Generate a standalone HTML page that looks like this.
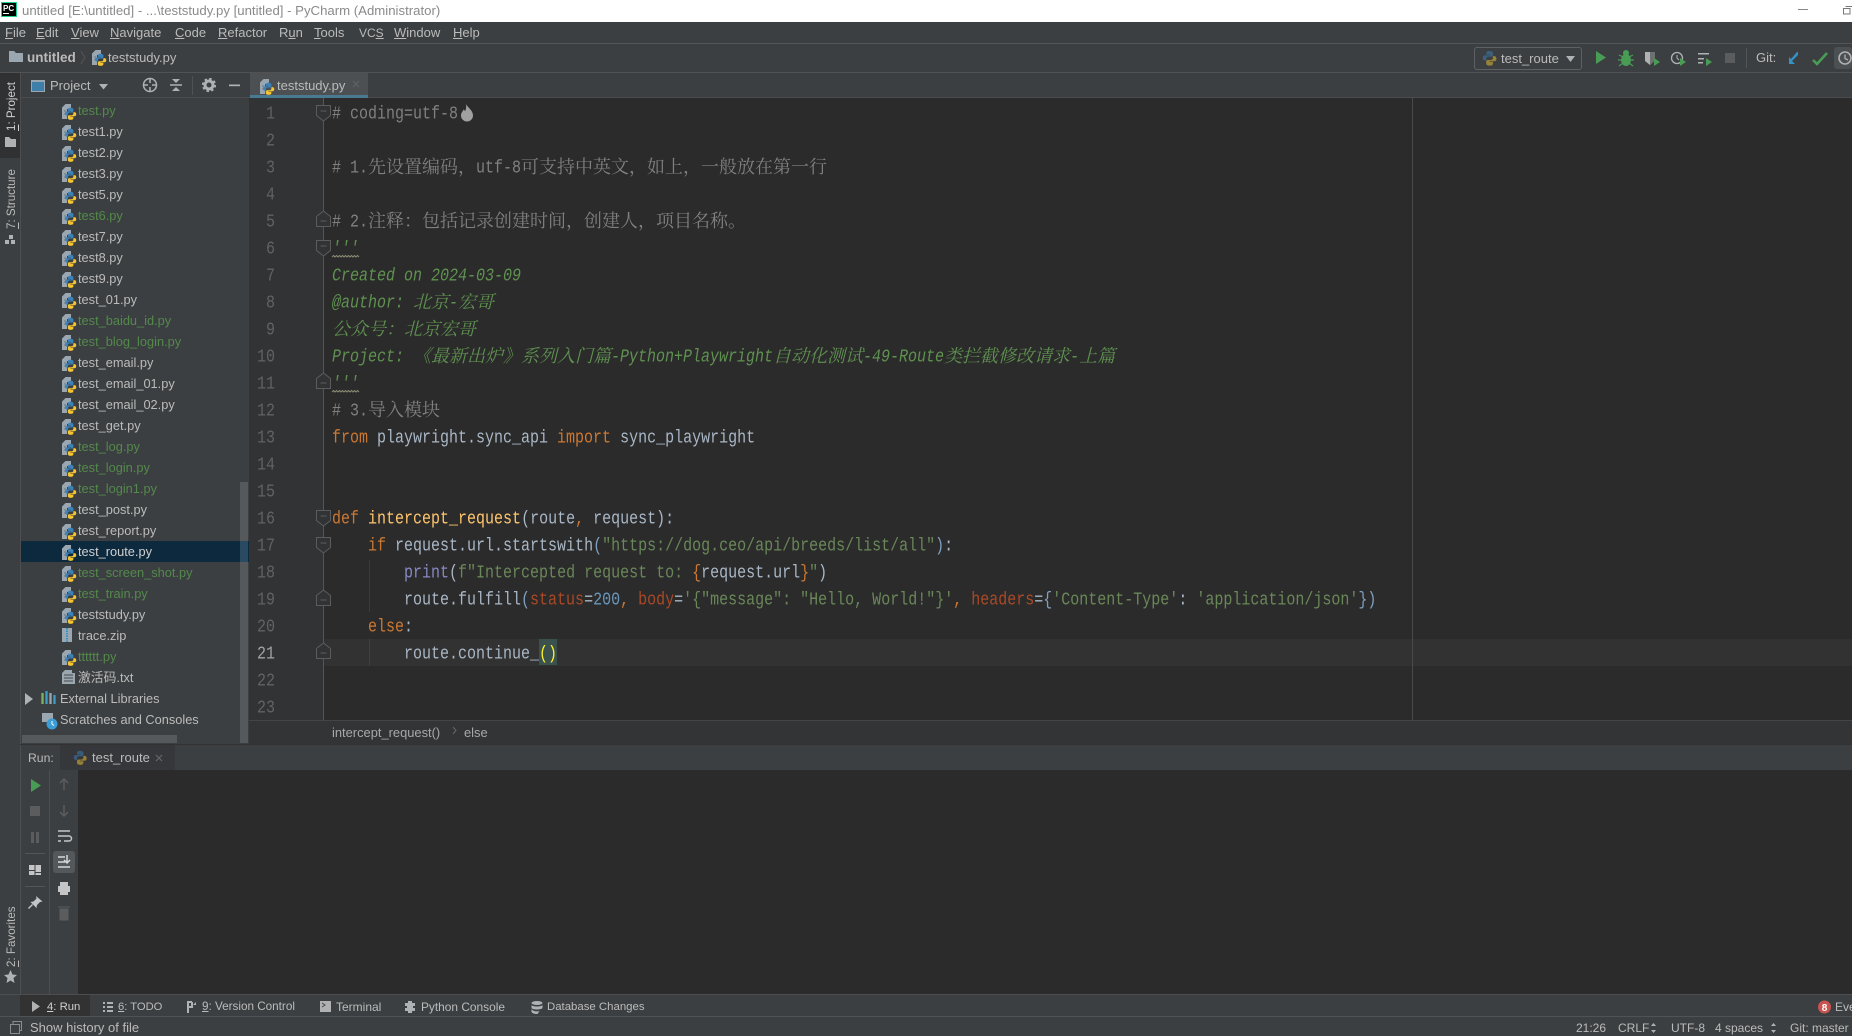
<!DOCTYPE html>
<html><head><meta charset="utf-8"><title>PyCharm</title>
<style>
html,body{margin:0;padding:0;width:1852px;height:1036px;overflow:hidden;background:#3c3f41}
body{font-family:"Liberation Sans","Noto Sans CJK SC",sans-serif;font-size:13px;color:#bbb;position:relative}
.a{position:absolute}
.t{position:absolute;white-space:pre;line-height:20px;height:20px}
u{text-decoration:underline}
#tree{position:absolute;left:78px;top:100px;width:160px}
#tree div{height:21px;line-height:21px;white-space:pre;color:#bbb;font-size:12.8px}
#tree .g{color:#53894b}
#code{position:absolute;left:332px;top:101px;font-family:"Liberation Mono",monospace;font-size:15px;color:#a9b7c6}
#code div{position:absolute;left:0;height:27px;line-height:27px;white-space:pre}
#code div.y{transform:scaleY(1.2);transform-origin:0 50%}
b.y{display:inline-block;font-weight:normal;transform:scaleY(1.2)}
#nums{position:absolute;left:249px;width:26px;top:101px;font-family:"Liberation Mono",monospace;font-size:15px;color:#606366;text-align:right}
#nums div{height:27px;line-height:27px;transform:scaleY(1.2)}
i.c{font-family:"Noto Serif CJK SC",serif;font-size:18px;line-height:1;position:relative;top:1px}
.m{color:#808080}
.d{color:#5f9150;font-style:italic}
.k{color:#cc7832}
.s{color:#6a8759}
.f{color:#ffc66d}
.b{color:#8888c6}
.p{color:#aa4926}
.n{color:#6897bb}
.q{color:#7f9fc0}
.v{position:absolute;white-space:pre;writing-mode:vertical-rl;transform:rotate(180deg);font-size:11.6px;color:#bbb;line-height:14px}
</style></head>
<body>
<!-- panels -->
<div class="a" style="left:0;top:0;width:1852px;height:22px;background:#fff"></div>
<div class="a" style="left:0;top:43px;width:1852px;height:1px;background:#555"></div>
<div class="a" style="left:0;top:72px;width:1852px;height:1px;background:#505254"></div>
<div class="a" style="left:20px;top:97px;width:1832px;height:1px;background:#4a4c4e"></div>
<div class="a" style="left:0;top:73px;width:20px;height:85px;background:#2f3132"></div>
<div class="a" style="left:20px;top:73px;width:1px;height:921px;background:#4c4e50"></div>
<!-- tab -->
<div class="a" style="left:250px;top:73px;width:118px;height:22px;background:#4c5052"></div>
<div class="a" style="left:250px;top:95px;width:118px;height:3px;background:#4a7a92"></div>
<!-- editor -->
<div class="a" style="left:249px;top:98px;width:75px;height:622px;background:#313335"></div>
<div class="a" style="left:324px;top:98px;width:1528px;height:622px;background:#2b2b2b"></div>
<div class="a" style="left:324px;top:639px;width:1528px;height:27px;background:#323232"></div>
<div class="a" style="left:1412px;top:98px;width:1px;height:622px;background:#4a4a4a"></div>
<div class="a" style="left:369px;top:560px;width:1px;height:52px;background:#3b3b3b"></div>
<div class="a" style="left:369px;top:639px;width:1px;height:27px;background:#3f3f3f"></div>
<div class="a" style="left:539px;top:639px;width:18px;height:26px;background:#3b514d"></div>
<div class="a" style="left:249px;top:720px;width:1603px;height:24px;background:#323436;border-top:1px solid #444;box-sizing:border-box"></div>
<!-- project scrollbars, selection -->
<div class="a" style="left:21px;top:541px;width:228px;height:21px;background:#0d293e"></div>
<div class="a" style="left:240px;top:482px;width:8px;height:261px;background:#56595b"></div>
<div class="a" style="left:240px;top:541px;width:8px;height:21px;background:#2a4a62"></div>
<div class="a" style="left:22px;top:735px;width:155px;height:8px;background:#56595b"></div>
<!-- run panel -->
<div class="a" style="left:20px;top:744px;width:1832px;height:1px;background:#323232"></div>
<div class="a" style="left:60px;top:745px;width:115px;height:25px;background:#35373a"></div>
<div class="a" style="left:78px;top:770px;width:1774px;height:224px;background:#2b2b2b"></div>
<div class="a" style="left:49px;top:770px;width:1px;height:224px;background:#4c4e50"></div>
<div class="a" style="left:53px;top:851px;width:22px;height:22px;background:#55585a;border-radius:3px"></div>
<div class="a" style="left:25px;top:853px;width:20px;height:1px;background:#555"></div>
<div class="a" style="left:25px;top:886px;width:20px;height:1px;background:#555"></div>
<div class="a" style="left:0;top:994px;width:1852px;height:1px;background:#4c4e50"></div>
<div class="a" style="left:0;top:1016px;width:1852px;height:1px;background:#505254"></div>
<div class="a" style="left:20px;top:995px;width:70px;height:21px;background:#323232"></div>
<!-- toolbar box -->
<div class="a" style="left:1474px;top:47px;width:106px;height:21px;border:1px solid #5e6163;border-radius:3px"></div>
<div class="a" style="left:1746px;top:48px;width:1px;height:20px;background:#555"></div>
<div class="a" style="left:192px;top:76px;width:1px;height:19px;background:#4f5153"></div>
<div class="a" style="left:1834px;top:47px;width:18px;height:22px;background:#4c5052;border-radius:3px"></div>

<!-- title + menu -->
<div class="t" style="left:22px;top:0;font-size:13.2px;line-height:22px;color:#8a8a8a">untitled [E:\untitled] - ...\teststudy.py [untitled] - PyCharm (Administrator)</div>
<div class="t" style="left:5px;top:23px"><u>F</u>ile</div>
<div class="t" style="left:36px;top:23px"><u>E</u>dit</div>
<div class="t" style="left:71px;top:23px"><u>V</u>iew</div>
<div class="t" style="left:110px;top:23px"><u>N</u>avigate</div>
<div class="t" style="left:175px;top:23px"><u>C</u>ode</div>
<div class="t" style="left:218px;top:23px"><u>R</u>efactor</div>
<div class="t" style="left:279px;top:23px">R<u>u</u>n</div>
<div class="t" style="left:314px;top:23px"><u>T</u>ools</div>
<div class="t" style="left:359px;top:23px;font-size:12px">VC<u>S</u></div>
<div class="t" style="left:394px;top:23px"><u>W</u>indow</div>
<div class="t" style="left:453px;top:23px"><u>H</u>elp</div>
<!-- nav -->
<div class="t" style="left:27px;top:48px;font-weight:bold;font-size:13.5px">untitled</div>
<div class="t" style="left:108px;top:48px">teststudy.py</div>
<div class="t" style="left:1501px;top:49px;color:#bbb">test_route</div>
<div class="t" style="left:1756px;top:48px">Git:</div>
<!-- project header -->
<div class="t" style="left:50px;top:76px">Project</div>
<div class="t" style="left:277px;top:76px">teststudy.py</div>
<!-- left stripe -->
<div class="v" style="left:5px;top:82px;height:49px;color:#d0d0d0"><u>1</u>: Project</div>
<div class="v" style="left:5px;top:169px;height:60px"><u>7</u>: Structure</div>
<div class="v" style="left:5px;top:907px;height:60px"><u>2</u>: Favorites</div>

<!-- tree -->
<div id="tree">
<div class="g">test.py</div>
<div>test1.py</div>
<div>test2.py</div>
<div>test3.py</div>
<div>test5.py</div>
<div class="g">test6.py</div>
<div>test7.py</div>
<div>test8.py</div>
<div>test9.py</div>
<div>test_01.py</div>
<div class="g">test_baidu_id.py</div>
<div class="g">test_blog_login.py</div>
<div>test_email.py</div>
<div>test_email_01.py</div>
<div>test_email_02.py</div>
<div>test_get.py</div>
<div class="g">test_log.py</div>
<div class="g">test_login.py</div>
<div class="g">test_login1.py</div>
<div>test_post.py</div>
<div>test_report.py</div>
<div style="color:#d0d0d0">test_route.py</div>
<div class="g">test_screen_shot.py</div>
<div class="g">test_train.py</div>
<div>teststudy.py</div>
<div>trace.zip</div>
<div class="g">tttttt.py</div>
<div>激活码.txt</div>
</div>
<div class="t" style="left:60px;top:689px;font-size:12.8px">External Libraries</div>
<div class="t" style="left:60px;top:710px;font-size:12.8px">Scratches and Consoles</div>

<!-- line numbers -->
<div id="nums">
<div>1</div><div>2</div><div>3</div><div>4</div><div>5</div><div>6</div><div>7</div><div>8</div><div>9</div><div>10</div><div>11</div><div>12</div><div>13</div><div>14</div><div>15</div><div>16</div><div>17</div><div>18</div><div>19</div><div>20</div><div style="color:#a4a3a3">21</div><div>22</div><div>23</div>
</div>

<!-- code -->
<div id="code">
<div class="m y" style="top:0"># coding=utf-8</div>
<div class="m" style="top:54px"><b class="y"># 1.</b><i class="c" style="font-style:normal">先设置编码，</i><b class="y">utf-8</b><i class="c" style="font-style:normal">可支持中英文，如上，一般放在第一行</i></div>
<div class="m" style="top:108px"><b class="y"># 2.</b><i class="c" style="font-style:normal">注释：包括记录创建时间，创建人，项目名称。</i></div>
<div class="d y" style="top:135px">'''</div>
<div class="d y" style="top:162px">Created on 2024-03-09</div>
<div class="d" style="top:189px"><b class="y">@author: </b><i class="c">北京</i><b class="y">-</b><i class="c">宏哥</i></div>
<div class="d" style="top:216px"><i class="c">公众号：北京宏哥</i></div>
<div class="d" style="top:243px"><b class="y">Project: </b><i class="c">《最新出炉》系列入门篇</i><b class="y">-Python+Playwright</b><i class="c">自动化测试</i><b class="y">-49-Route</b><i class="c">类拦截修改请求</i><b class="y">-</b><i class="c">上篇</i></div>
<div class="d y" style="top:270px">'''</div>
<div class="m" style="top:297px"><b class="y"># 3.</b><i class="c" style="font-style:normal">导入模块</i></div>
<div class="y" style="top:324px"><span class="k">from</span> playwright.sync_api <span class="k">import</span> sync_playwright</div>
<div class="y" style="top:405px"><span class="k">def</span> <span class="f">intercept_request</span>(route<span class="k">,</span> request):</div>
<div class="y" style="top:432px">    <span class="k">if</span> request.url.startswith<span class="q">(</span><span class="s">"https://dog.ceo/api/breeds/list/all"</span><span class="q">)</span>:</div>
<div class="y" style="top:459px">        <span class="b">print</span>(<span class="s">f"Intercepted request to: </span><span class="k">{</span>request.url<span class="k">}</span><span class="s">"</span>)</div>
<div class="y" style="top:486px">        route.fulfill<span class="q">(</span><span class="p">status</span>=<span class="n">200</span><span class="k">,</span> <span class="p">body</span>=<span class="s">'{"message": "Hello, World!"}'</span><span class="k">,</span> <span class="p">headers</span>=<span class="q">{</span><span class="s">'Content-Type'</span>: <span class="s">'application/json'</span><span class="q">})</span></div>
<div class="y" style="top:513px">    <span class="k">else</span>:</div>
<div class="y" style="top:540px">        route.continue_<span style="color:#ffef28">()</span></div>
</div>

<!-- breadcrumbs -->
<div class="t" style="left:332px;top:723px;font-size:12.9px;color:#a8a8a8">intercept_request()</div>
<div class="t" style="left:464px;top:723px;font-size:12.9px;color:#a8a8a8">else</div>
<!-- run bar -->
<div class="t" style="left:28px;top:748px;font-size:12.2px">Run:</div>
<div class="t" style="left:92px;top:748px">test_route</div>
<!-- bottom tabs -->
<div class="t" style="left:47px;top:997px;font-size:11.3px;color:#d0d0d0"><u>4</u>: Run</div>
<div class="t" style="left:118px;top:997px;font-size:11.2px"><u>6</u>: TODO</div>
<div class="t" style="left:202px;top:997px;font-size:11.7px"><u>9</u>: Version Control</div>
<div class="t" style="left:336px;top:997px;font-size:12px">Terminal</div>
<div class="t" style="left:421px;top:997px;font-size:11.9px">Python Console</div>
<div class="t" style="left:547px;top:997px;font-size:11.4px">Database Changes</div>
<div class="t" style="left:1835px;top:997px;font-size:12px">Eve</div>
<!-- status -->
<div class="t" style="left:30px;top:1018px;font-size:13px">Show history of file</div>
<div class="t" style="left:1576px;top:1018px;font-size:12px">21:26</div>
<div class="t" style="left:1618px;top:1018px;font-size:12px">CRLF</div>
<div class="t" style="left:1671px;top:1018px;font-size:12px">UTF-8</div>
<div class="t" style="left:1715px;top:1018px;font-size:12px">4 spaces</div>
<div class="t" style="left:1790px;top:1018px;font-size:12px">Git: master</div>

<!-- icons -->
<svg class="a" style="left:0;top:0" width="1852" height="1036" viewBox="0 0 1852 1036" xmlns="http://www.w3.org/2000/svg">
<defs>
<g id="py16">
<path d="M8 1C5 1 4.500 2 4.500 3.500V5H8.200v.6H3C1.500 5.600.8 6.800.8 8.200S1.500 11 3 11h1.500V9.200C4.500 7.900 5.500 7 6.800 7h3C11 7 11.600 6.200 11.600 5V3.300C11.600 2 10.200 1 8 1z" fill="#3b82b8"/>
<path d="M8 1C5 1 4.500 2 4.500 3.500V5H8.200v.6H3C1.500 5.600.8 6.800.8 8.200S1.500 11 3 11h1.500V9.200C4.500 7.900 5.500 7 6.800 7h3C11 7 11.600 6.200 11.600 5V3.300C11.600 2 10.200 1 8 1z" fill="#f4c431" transform="rotate(180 8 8.500) translate(0 -.5)"/>
</g>
<g id="pyf" transform="translate(0 1)">
<path d="M0 3.500 3.500 0H9v5H5v10H0z" fill="#9aa7b0"/>
<path d="M2 7h2M2 10h2" stroke="#6f7a82" stroke-width="1"/>
<use href="#py16" transform="translate(2.400 3) scale(.78)"/>
</g>
<g id="fd"><path d="M.5.500h14v10l-7 5.500-7-5.500z" fill="#313335" stroke="#5a5c5e"/><path d="M4.500 6h6" stroke="#5a5c5e"/></g>
<g id="fu"><path d="M.5 15.500V5.500l7-5.500 7 5.500v10z" fill="#313335" stroke="#5a5c5e"/><path d="M4.500 10h6" stroke="#5a5c5e"/></g>
<g id="gp"><path d="M0 0v13l10-6.500z" fill="#499c54"/></g>
</defs>
<!-- PC logo -->
<rect x="1.500" y="2.500" width="15" height="14" fill="#000" stroke="#1fd28c"/>
<text x="3" y="11" font-family="Liberation Sans" font-size="8" font-weight="bold" fill="#fff">PC</text>
<rect x="3" y="13" width="6" height="1" fill="#fff"/>
<!-- window controls -->
<rect x="1798" y="9" width="10" height="1" fill="#888"/>
<path d="M1845.500 6.500h7M1843.500 8.500h6.500v5.500h-6.500z" fill="none" stroke="#777"/>
<!-- nav -->
<path d="M9 51h5l2 2h7v9H9z" fill="#9aa7b0"/>
<path d="M81 51l4 6.500-4 6.500" fill="none" stroke="#555"/>
<use href="#pyf" x="92" y="49"/>
<!-- toolbar -->
<g opacity=".5"><use href="#py16" transform="translate(1482 50) scale(.95)"/></g>
<path d="M1566 56h9l-4.500 6z" fill="#afb1b3"/>
<use href="#gp" x="1596" y="51"/>
<g fill="#499c54"><ellipse cx="1626" cy="60" rx="5" ry="6"/><circle cx="1626" cy="53" r="3"/><path d="M1619 55l4 2M1633 55l-4 2M1618 60h4M1634 60h-4M1619 66l4-3M1633 66l-4-3" stroke="#499c54" stroke-width="1.200"/></g>
<path d="M1645 52h10v8l-5 5-5-4z" fill="#afb1b3"/><path d="M1650 52h5v8l-5 5z" fill="#6e7072"/>
<path d="M1654 58v8l6-4z" fill="#499c54"/>
<circle cx="1677" cy="58" r="5.500" fill="none" stroke="#afb1b3" stroke-width="1.300"/><path d="M1677 55v3l2 2" fill="none" stroke="#afb1b3"/>
<path d="M1680 58v8l6-4z" fill="#499c54"/>
<path d="M1698 53h11v1.500h-11zM1698 58h6v1.500h-6zM1698 62h5v1.500h-5z" fill="#afb1b3"/>
<path d="M1706 58v8l6-4z" fill="#499c54"/>
<rect x="1725" y="53" width="10" height="10" fill="#5a5c5e"/>
<path d="M1798 52v3l-6 6 3 3h-6v-7l2 2 6-7z" fill="#3592c4"/>
<path d="M1813 60l4 4 10-11" fill="none" stroke="#499c54" stroke-width="2.600"/>
<circle cx="1845" cy="58" r="6" fill="none" stroke="#afb1b3" stroke-width="1.600"/><path d="M1845 54.500V58.500l3 1.500" fill="none" stroke="#afb1b3" stroke-width="1.300"/>
<!-- project header -->
<rect x="31.500" y="80.500" width="13" height="11" fill="#3d7fa8" stroke="#9aa7b0"/><rect x="31" y="80" width="14" height="2" fill="#9aa7b0"/>
<path d="M99 84h9l-4.500 5.500z" fill="#afb1b3"/>
<circle cx="150" cy="85" r="6.500" fill="none" stroke="#afb1b3" stroke-width="1.500"/><path d="M150 78v5M150 87v5M143 85h5M152 85h5" stroke="#afb1b3" stroke-width="1.500"/>
<path d="M170 85h12" stroke="#afb1b3" stroke-width="1.500"/><path d="M172 79h8l-4 4zM172 91h8l-4-4z" fill="#afb1b3"/>
<circle cx="209" cy="85" r="4" fill="none" stroke="#afb1b3" stroke-width="3"/><circle cx="209" cy="85" r="6.200" fill="none" stroke="#afb1b3" stroke-width="1.800" stroke-dasharray="2.500 2.370"/>
<rect x="229" y="84.500" width="11" height="1.700" fill="#afb1b3"/>
<use href="#pyf" x="260" y="78"/>
<path d="M353 81l6 6M359 81l-6 6" stroke="#5f6264" stroke-width="1.200"/>
<!-- left stripe icons -->
<path d="M5 137h4l2 2h5v8H5z" fill="#afb1b3"/>
<path d="M9 235h4v4H9zM5 240h4v4H5zM11 240h4v4h-4z" fill="#afb1b3"/>
<path d="M10.500 970l2 4.500 4.500.5-3.500 3 1 5-4-2.500-4 2.500 1-5-3.500-3 4.500-.5z" fill="#afb1b3"/>
<!-- fold -->
<path d="M323.500 98V720" stroke="#555"/>
<use href="#fd" x="316" y="105"/><use href="#fu" x="316" y="211"/><use href="#fd" x="316" y="240"/><use href="#fu" x="316" y="373"/>
<use href="#fd" x="316" y="510"/><use href="#fd" x="316" y="537"/><use href="#fu" x="316" y="590"/><use href="#fu" x="316" y="643"/>
<!-- flame -->
<path d="M466 104c1 3 7 6 7 11.500a6 6 0 0 1-12 0c0-3 2-4 2.500-6 1 .5 1.500 1 1.500 2 1-2 1.500-5 1-7.500z" fill="#a0a0a0"/>
<!-- wavy -->
<path d="M332 257l1.500-1.500 1.500 1.500 1.500-1.500 1.500 1.500 1.500-1.500 1.500 1.500 1.500-1.500 1.500 1.500 1.500-1.500 1.500 1.500 1.500-1.500 1.500 1.500 1.500-1.500 1.500 1.500 1.500-1.500 1.500 1.500 1.500-1.500 1.500 1.500" fill="none" stroke="#8a8a72"/>
<path d="M332 392l1.500-1.500 1.500 1.500 1.500-1.500 1.500 1.500 1.500-1.500 1.500 1.500 1.500-1.500 1.500 1.500 1.500-1.500 1.500 1.500 1.500-1.500 1.500 1.500 1.500-1.500 1.500 1.500 1.500-1.500 1.500 1.500 1.500-1.500 1.500 1.500" fill="none" stroke="#8a8a72"/>
<path d="M453 727l3 3.500-3 3.500" fill="none" stroke="#666"/>
<!-- tree icons -->
<use href="#pyf" x="62" y="103"/><use href="#pyf" x="62" y="124"/><use href="#pyf" x="62" y="145"/><use href="#pyf" x="62" y="166"/><use href="#pyf" x="62" y="187"/><use href="#pyf" x="62" y="208"/><use href="#pyf" x="62" y="229"/><use href="#pyf" x="62" y="250"/><use href="#pyf" x="62" y="271"/><use href="#pyf" x="62" y="292"/><use href="#pyf" x="62" y="313"/><use href="#pyf" x="62" y="334"/><use href="#pyf" x="62" y="355"/><use href="#pyf" x="62" y="376"/><use href="#pyf" x="62" y="397"/><use href="#pyf" x="62" y="418"/><use href="#pyf" x="62" y="439"/><use href="#pyf" x="62" y="460"/><use href="#pyf" x="62" y="481"/><use href="#pyf" x="62" y="502"/><use href="#pyf" x="62" y="523"/><use href="#pyf" x="62" y="544"/><use href="#pyf" x="62" y="565"/><use href="#pyf" x="62" y="586"/><use href="#pyf" x="62" y="607"/>
<rect x="62" y="628" width="10" height="14" fill="#9aa7b0"/><path d="M67 628v14" stroke="#3592c4" stroke-width="2" stroke-dasharray="1.500 1"/>
<use href="#pyf" x="62" y="649"/>
<path d="M65 670h7v3h3v11H62v-11z" fill="#9aa7b0"/><path d="M64 675h9M64 678h9M64 681h9" stroke="#45484a"/>
<path d="M25 693v12l8-6z" fill="#afb1b3"/>
<path d="M42.500 693v11M46.500 691v13M50.500 693v11M54.500 695v9" stroke-width="2.200" stroke="#3f9fc9"/><path d="M42.500 693v11" stroke-width="2.200" stroke="#7db35e"/><path d="M50.500 693v11" stroke-width="2.200" stroke="#9aa7b0"/>
<rect x="42" y="713" width="11" height="9" fill="#9aa7b0"/><circle cx="52" cy="724" r="5.500" fill="#3b9dd6"/><path d="M52 721v3l2 1.500" fill="none" stroke="#fff"/>
<!-- run -->
<g opacity=".5"><use href="#py16" transform="translate(73 750) scale(.9)"/></g>
<path d="M156 755l6 6M162 755l-6 6" stroke="#666" stroke-width="1.200"/>
<path d="M31 779v13l10-6.500z" fill="#499c54"/>
<rect x="30" y="806" width="10" height="10" fill="#5a5c5e"/>
<path d="M31 832h3v11h-3zM36 832h3v11h-3z" fill="#5a5c5e"/>
<path d="M29 865h5.500v5H29zM35.500 865H41v7h-5.500zM29 871h5.500v4H29zM35.500 873H41v2h-5.500z" fill="#c3c5c7"/>
<path d="M36 896l6.500 5.500-2.500.5-3 3-.5 3-6-6 3-.5 3-3z" fill="#c3c5c7"/><path d="M32.500 904.500l-4 4" stroke="#c3c5c7" stroke-width="1.300"/>
<path d="M64 779v11M60 783l4-4 4 4" fill="none" stroke="#5a5c5e" stroke-width="1.500"/>
<path d="M64 805v11M60 812l4 4 4-4" fill="none" stroke="#5a5c5e" stroke-width="1.500"/>
<path d="M58 831h12M58 836h11a2 2 0 0 1 0 5h-5M58 841h3" fill="none" stroke="#c3c5c7" stroke-width="1.500"/>
<path d="M58 857h7M58 862h7M58 867h12M67 855v7M64 860l3 3 3-3" fill="none" stroke="#d5d7d9" stroke-width="1.500"/>
<path d="M60 882h8v4h2v6h-2v3h-8v-3h-2v-6h2z" fill="#c3c5c7"/>
<path d="M60 909h8v11h-8zM58 907h12" fill="#5a5c5e" stroke="#5a5c5e"/>
<!-- bottom tabs -->
<path d="M32 1001v11l8-5.500z" fill="#afb1b3"/>
<path d="M103 1002h2v2h-2zM103 1006h2v2h-2zM103 1010h2v2h-2zM107 1002h6v2h-6zM107 1006h6v2h-6zM107 1010h6v2h-6z" fill="#afb1b3"/>
<path d="M188 1013v-11h4M192 1002v5h-4" fill="none" stroke="#afb1b3" stroke-width="2"/><path d="M196 1002l-3 3 3 0z" fill="#afb1b3"/>
<rect x="320" y="1001" width="11" height="11" fill="#afb1b3"/><path d="M322 1003l3 2-3 2" fill="none" stroke="#45484a"/>
<path d="M408 1001h4v2h3v3h-2v2h2v3h-3v2h-4v-2h-3v-3h2v-2h-2v-3h3z" fill="#afb1b3"/>
<ellipse cx="537" cy="1003" rx="5.500" ry="2" fill="#afb1b3"/><path d="M531.500 1005v3c1 2 10 2 11 0v-3c-1 2-10 2-11 0zM531.500 1009v3c1 2 5 2 6 2l2-3c-3 1-7 0-8-2z" fill="#afb1b3"/>
<rect x="10.500" y="1024.500" width="9" height="9" fill="none" stroke="#8a8d8f"/><path d="M13 1024v-2.500h8.500v9H20" fill="none" stroke="#8a8d8f"/>
<circle cx="1824.500" cy="1007" r="6.500" fill="#c75450"/>
<text x="1824.500" y="1011" font-family="Liberation Sans" font-size="10" font-weight="bold" fill="#fff" text-anchor="middle">8</text>
<path d="M1651 1026l2.500-3 2.500 3zM1651 1030l2.500 3 2.500-3z" fill="#afb1b3"/>
<path d="M1771 1026l2.500-3 2.500 3zM1771 1030l2.500 3 2.500-3z" fill="#afb1b3"/>
</svg>
</body></html>
